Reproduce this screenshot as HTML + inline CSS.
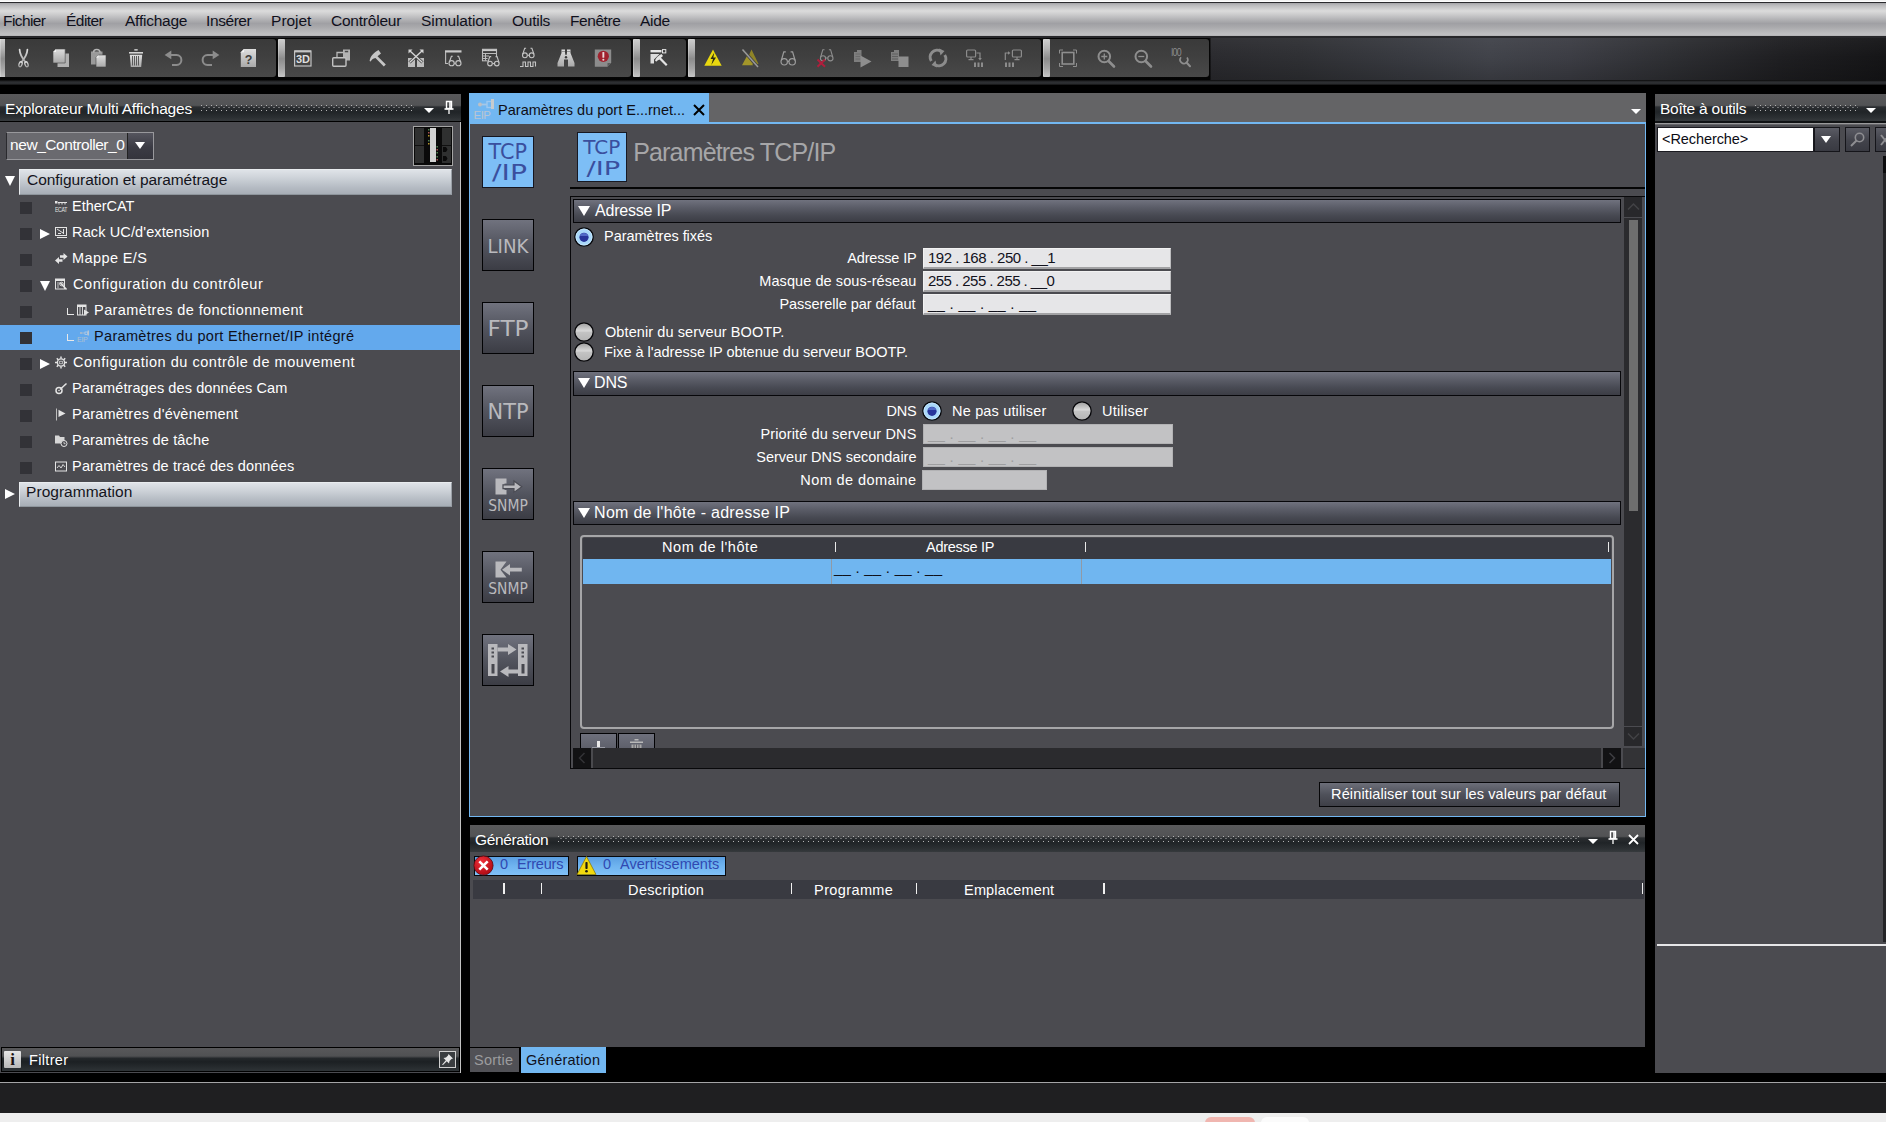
<!DOCTYPE html>
<html lang="fr"><head><meta charset="utf-8"><title>Sysmac Studio</title>
<style>
*{box-sizing:border-box;margin:0;padding:0}
html,body{width:1886px;height:1122px;overflow:hidden;background:#000}
body{position:relative;font-family:"Liberation Sans",sans-serif;font-size:14.5px;color:#fff;letter-spacing:0}
.a{position:absolute;white-space:nowrap}
.t{position:absolute;white-space:nowrap;line-height:20px;height:20px}
/* menu */
#topline{left:0;top:0;width:1886px;height:3px;background:linear-gradient(#f3f3f3 0,#f3f3f3 33%,#fdfdfd 33%,#fdfdfd 66%,#2a2a2d 66%)}
#menubar{left:0;top:3px;width:1886px;height:33px;background:linear-gradient(#a4a4a7 0,#b9b9bb 6%,#cbcbcc 15%,#dbdbdb 24%,#d0d0d1 32%,#c0c0c2 42%,#acacaf 54%,#a0a0a4 62%,#a8a8ab 72%,#b6b6b8 85%,#c0c0c2 95%,#b2b2b4 100%);border-bottom:0}
#menubar span{position:absolute;top:8px;line-height:20px;color:#10101c;font-size:15.5px}
/* toolbar */
#toolbar{left:0;top:38px;width:1886px;height:42px;background:linear-gradient(rgba(255,255,255,.04),rgba(255,255,255,0) 45%,rgba(0,0,0,.18)),linear-gradient(90deg,#040404 0,#040404 1210px,#2b2b2f 1211px,#2f3034 1300px,#383a40 1400px,#41434a 1490px,#3c3d44 1570px,#2e2f33 1670px,#1f1f22 1780px,#151517 1886px)}
#tbstripe{left:0;top:80px;width:1886px;height:5px;background:linear-gradient(#0a0a0a,#2e3033 40%,#2a2c2f 70%,#111)}
.tg{position:absolute;top:38px;height:40px;background:linear-gradient(#3a3a3a,#404040 50%,#494949);border:1px solid #050505;border-left:none;border-radius:0 4px 4px 0}
.grip{position:absolute;top:39px;height:38px;width:7px;background:linear-gradient(#cfcfcf,#b4b4b4 25%,#8c8c8c 52%,#a6a6a6 78%,#c6c6c6);box-shadow:inset 1px 0 0 rgba(255,255,255,.25);border-radius:1px}
.ic{position:absolute;top:46px;width:24px;height:24px}
/* panels */
.panel{position:absolute;background:#4b4b50}
.ptitle{position:absolute;height:27px;background:linear-gradient(#59595b 0,#525355 42%,#2b2e31 48%,#202427 66%,#2c3033 88%,#363a3d 100%)}
.ptitle .t{top:5px;left:5px;color:#fff;font-size:15.5px}
.dots{position:absolute;height:6px;top:11px}

.darr{position:absolute;top:14px;width:0;height:0;border-style:solid;border-color:#fff transparent transparent transparent;border-width:5px 5px 0 5px}
.rarr{position:absolute;width:0;height:0;border-style:solid;border-color:transparent transparent transparent #fff;border-width:5px 0 5px 10px}
.pin{position:absolute;top:6px;width:12px;height:16px}
.sect{position:absolute;left:19px;width:433px;background:linear-gradient(#dfe3e8 0,#cfd4da 30%,#b4bac2 75%,#a7aeb6 100%);border:1px solid #e9ecef;border-bottom-color:#8e959c;border-right-color:#9aa0a7}
.cb{position:absolute;left:20px;width:12px;height:12px;background:#323237}
.dots{background:linear-gradient(90deg,#b4b4b4 1px,transparent 1px) 0 0/5px 1px repeat-x,linear-gradient(90deg,transparent 2px,#707274 2px,#707274 4px,transparent 4px) 0 2px/5px 1px repeat-x,linear-gradient(90deg,#b4b4b4 1px,transparent 1px) 0 5px/5px 1px repeat-x}

.shdr{position:absolute;left:573px;width:1048px;border:1px solid #07070a;background:linear-gradient(#70727e 0,#5a5c67 35%,#474952 70%,#3c3d45 100%)}
.inp{position:absolute;background:#e6e6e8;border:1px solid #f2f2f2;border-bottom:2px solid #a2a2a4;border-right:1px solid #bdbdbf;color:#12121c;font-size:15px;line-height:17px;padding-left:4px;letter-spacing:-0.1px;white-space:pre}
.inp.dis{background:#c2c2c4;border:1px solid #b2b2b4;color:#9e9ea0;line-height:18px}
</style></head><body>
<div class="a" id="topline"></div>
<div class="a" id="menubar">
<span style="letter-spacing:-0.62px;left:3.1px">Fichier</span><span style="letter-spacing:-0.56px;left:66.1px">Éditer</span><span style="letter-spacing:-0.24px;left:125.0px">Affichage</span><span style="letter-spacing:-0.44px;left:206.1px">Insérer</span><span style="letter-spacing:-0.05px;left:271.1px">Projet</span><span style="letter-spacing:-0.22px;left:331.0px">Contrôleur</span><span style="letter-spacing:-0.12px;left:421.1px">Simulation</span><span style="letter-spacing:-0.25px;left:512.0px">Outils</span><span style="letter-spacing:-0.46px;left:570.1px">Fenêtre</span><span style="letter-spacing:-0.26px;left:640.0px">Aide</span>
</div>
<div class="a" style="left:0;top:36px;width:1886px;height:2px;background:#27272a"></div>
<div class="a" id="toolbar"></div>
<div class="a" id="tbstripe"></div>
<svg width="0" height="0" style="position:absolute"><defs>
<linearGradient id="gl" x1="0" y1="0" x2="0" y2="1"><stop offset="0" stop-color="#dedede"/><stop offset="1" stop-color="#a9a9a9"/></linearGradient>
<linearGradient id="gd" x1="0" y1="0" x2="0" y2="1"><stop offset="0" stop-color="#9a9a9a"/><stop offset="1" stop-color="#7c7c7c"/></linearGradient>
</defs></svg>
<div class="grip" style="left:0;width:5px;border-radius:0"></div>
<div class="tg" style="left:5px;width:272px"></div>
<svg class="ic" style="left:11px" viewBox="0 0 24 24"><g fill="none" stroke="url(#gl)" stroke-width="1.7" stroke-linecap="round"><path d="M8.6 3.6C8.8 8 11 12 14.6 16.2M16.4 3.6C16.2 8 14 12 10.4 16.2"/><ellipse cx="9.5" cy="18.3" rx="1.5" ry="2.6" transform="rotate(20 9.5 18.3)" stroke-width="1.3"/><ellipse cx="15.5" cy="18.3" rx="1.5" ry="2.6" transform="rotate(-20 15.5 18.3)" stroke-width="1.3"/></g></svg>
<svg class="ic" style="left:49px" viewBox="0 0 24 24"><path d="M8.5 7.5H20V21H8.5z" fill="#b2b2b2"/><path d="M7 3H16.2V17H4V6z" fill="url(#gl)" stroke="#454545" stroke-width=".6"/><path d="M4 6L7 3V6z" fill="#f2f2f2"/></svg>
<svg class="ic" style="left:86px" viewBox="0 0 24 24"><path d="M5 5.5H16.5V18.5H5z" fill="#9a9a9a"/><path d="M7.5 6.5C7.5 2.5 14 2.5 14 6.5" fill="none" stroke="#b5b5b5" stroke-width="1.6"/><path d="M12.5 9H20V21H10V11.5z" fill="url(#gl)" stroke="#454545" stroke-width=".6"/><path d="M10 11.5L12.5 9V11.5z" fill="#f2f2f2"/></svg>
<svg class="ic" style="left:124px" viewBox="0 0 24 24"><rect x="10.3" y="3" width="3.4" height="1.7" fill="#bcbcbc"/><rect x="5" y="6" width="14" height="1.6" fill="#d4d4d4"/><path d="M5.8 8.8H18.2L17.2 21H6.8z" fill="url(#gl)"/><path d="M8.5 10V19.5M10.5 10V19.5M12.5 10V19.5M14.5 10V19.5" stroke="#5a5a5a" stroke-width="1"/></svg>
<svg class="ic" style="left:161px" viewBox="0 0 24 24"><path d="M3.6 9L10.3 4.6V13.2z" fill="#8c8c8c"/><path d="M9.5 9H15.5C22 9 22 19 15.5 19H11" fill="none" stroke="#8c8c8c" stroke-width="2"/></svg>
<svg class="ic" style="left:199px" viewBox="0 0 24 24"><path d="M20.4 9L13.7 4.6V13.2z" fill="#8c8c8c"/><path d="M14.5 9H8.5C2 9 2 19 8.500 19H13" fill="none" stroke="#8c8c8c" stroke-width="2"/></svg>
<svg class="ic" style="left:236px" viewBox="0 0 24 24"><path d="M8 3H20V21H4.8V6.200z" fill="url(#gl)"/><path d="M4.8 6.200L8 3V6.200z" fill="#f4f4f4"/><text x="12.6" y="17.6" font-family="Liberation Sans,sans-serif" font-weight="bold" font-size="12.500" text-anchor="middle" fill="#3c3c3c" letter-spacing="0">?</text></svg>
<div class="tg" style="left:281px;width:351px"></div>
<div class="grip" style="left:278px;width:7px"></div>
<svg class="ic" style="left:291px" viewBox="0 0 24 24"><rect x="3.6" y="5" width="16.400" height="15" fill="none" stroke="#c4c4c4" stroke-width="1.2"/><rect x="3.600" y="4.400" width="16.400" height="2" fill="#c4c4c4"/><text x="11.8" y="17.2" font-family="Liberation Sans,sans-serif" font-weight="bold" font-size="11" text-anchor="middle" fill="#dedede" letter-spacing="-0.3">3D</text></svg>
<svg class="ic" style="left:329px" viewBox="0 0 24 24"><path d="M8 11V6.500H15.500" fill="none" stroke="#b9b9b9" stroke-width="1.300"/><rect x="14" y="3.5" width="7" height="11" fill="#b4b4b4"/><rect x="15.800" y="4.800" width="3.400" height="1.500" fill="#4a4a4a"/><rect x="3.700" y="11.700" width="13.300" height="8.600" rx="1" fill="#444" stroke="#c2c2c2" stroke-width="1.400"/></svg>
<svg class="ic" style="left:366px" viewBox="0 0 24 24"><path d="M3.600 15C4.500 9.500 8 6.500 12.500 4L15 7.500L11.500 10.200L19.800 18.500L17.800 20.500L9.500 12C7 12.500 5.500 13.500 4.800 15.500z" fill="#c6c6c6"/></svg>
<svg class="ic" style="left:404px" viewBox="0 0 24 24"><rect x="4" y="12" width="7" height="9" fill="#bdbdbd"/><rect x="13" y="12" width="7" height="9" fill="#bdbdbd"/><path d="M5.500 4.500L18.500 16.500M18.500 4.500L5.500 16.500" stroke="#444" stroke-width="3"/><path d="M5.500 4.500L18.500 16.500M18.500 4.500L5.500 16.500" stroke="#d6d6d6" stroke-width="1.300"/><path d="M4.500 3.500H8.500L4.500 7.500zM19.500 3.500H15.500L19.500 7.500z" fill="#d6d6d6"/></svg>
<svg class="ic" style="left:441px" viewBox="0 0 24 24"><rect x="4" y="4.300" width="16.500" height="2.200" fill="#c9c9c9"/><path d="M4.600 6V17.500H7" fill="none" stroke="#bdbdbd" stroke-width="1.100"/><g fill="none" stroke="#c4c4c4" stroke-width="1.1"><circle cx="10.6" cy="17.2" r="2.6"/><circle cx="17.4" cy="17.2" r="2.6"/><path d="M13.2 17.2H14.8"/><path d="M8.4 16.0L10.4 10.2H11.8M19.6 16.0L17.6 10.2H16.2"/></g></svg>
<svg class="ic" style="left:479px" viewBox="0 0 24 24"><rect x="3.500" y="3.300" width="14" height="11.500" fill="none" stroke="#bdbdbd" stroke-width="1.100"/><rect x="3.500" y="3.300" width="14" height="1.800" fill="#c9c9c9"/><path d="M3.500 7.500H17.500M3.500 10H10M3.500 12.500H9M6.500 7.500V14.500" stroke="#bdbdbd" stroke-width="1"/><rect x="8.500" y="11" width="12" height="9.500" fill="#444"/><g fill="none" stroke="#c4c4c4" stroke-width="1.1"><circle cx="11.0" cy="17.6" r="2.3"/><circle cx="17.8" cy="17.6" r="2.3"/><path d="M13.6 17.6H15.200000000000001"/><path d="M8.8 16.400000000000002L10.8 10.600000000000001H12.2M20.0 16.400000000000002L18.0 10.600000000000001H16.6"/></g></svg>
<svg class="ic" style="left:516px" viewBox="0 0 24 24"><g fill="none" stroke="#c4c4c4" stroke-width="1.1"><circle cx="8.9" cy="9.3" r="2.4"/><circle cx="15.700000000000001" cy="9.3" r="2.4"/><path d="M11.5 9.3H13.100000000000001"/><path d="M6.700000000000001 8.100000000000001L8.700000000000001 2.3000000000000007H10.100000000000001M17.9 8.100000000000001L15.9 2.3000000000000007H14.5"/></g><path d="M4 20.500H7V16H9.500V20.500H12V16H14.500V20.500H17V16H19.500V20.500" fill="none" stroke="#c4c4c4" stroke-width="1.100"/></svg>
<svg class="ic" style="left:554px" viewBox="0 0 24 24"><path d="M7.500 3.500H11V7L11.500 9H12.500L13 7V3.500H16.500V7L20.500 17V20.500H14V13.500H10V20.500H3.500V17L7.500 7z" fill="url(#gl)"/><circle cx="12" cy="11.300" r="1.200" fill="#3a3a3a"/><path d="M7.500 5.500H11M13 5.500H16.500" stroke="#777" stroke-width=".7"/></svg>
<svg class="ic" style="left:591px" viewBox="0 0 24 24"><path d="M3.800 3.600H20.200V17L16.500 20.800H3.800z" fill="#8c8c8c"/><path d="M20.200 17H16.500V20.800z" fill="#5c5c5c"/><circle cx="12.300" cy="10.300" r="5.600" fill="#a0222e"/><rect x="11.400" y="6" width="1.900" height="5.800" rx=".6" fill="#e9d9d9"/><circle cx="12.350" cy="13.700" r="1.050" fill="#e9d9d9"/></svg>
<div class="tg" style="left:636px;width:51px"></div>
<div class="grip" style="left:633px;width:7px"></div>
<svg class="ic" style="left:646px" viewBox="0 0 24 24"><rect x="4.500" y="4" width="11" height="2.400" fill="#e4e4e4"/><rect x="16.500" y="3.600" width="3.300" height="3.300" fill="none" stroke="#e4e4e4" stroke-width="1"/><path d="M4.500 8H13.500L8 13.500V17.500H4.500z" fill="#dcdcdc"/><path d="M9 14.500C10 11.500 12.500 9.500 15.500 8L17 10L15 11.800L21.500 18.500L20 20L13.500 13.500C12 14 11 14.800 10.300 15.800z" fill="#e4e4e4"/></svg>
<div class="tg" style="left:691px;width:351px"></div>
<div class="grip" style="left:688px;width:7px"></div>
<svg class="ic" style="left:701px" viewBox="0 0 24 24"><path d="M12 3.500L20.700 19.800H3.300z" fill="#e9d80f"/><path d="M13.300 6.500L9.500 13H12L10.300 19L15 11.500H12.300z" fill="#2b2b14"/></svg>
<svg class="ic" style="left:738px" viewBox="0 0 24 24"><path d="M13.500 3.500L20.500 18H7z" fill="#8f8427"/><path d="M9.500 9L15 19.300H4z" fill="#a3962a"/><path d="M5 4L19.500 20.500" stroke="#444" stroke-width="3.200"/><path d="M4.500 3.500L20 21" stroke="#9a9a9a" stroke-width="1.500"/></svg>
<svg class="ic" style="left:776px" viewBox="0 0 24 24"><g fill="none" stroke="#9c9c9c" stroke-width="1.200"><circle cx="8.200" cy="15.800" r="3.200"/><circle cx="16.200" cy="15.800" r="3.200"/><path d="M11.400 15.300H13M5.300 14.500L7.800 5.800H9.800M19.100 14.500L16.600 5.800H14.600"/></g></svg>
<svg class="ic" style="left:813px" viewBox="0 0 24 24"><g fill="none" stroke="#8e8e8e" stroke-width="1.100"><circle cx="10" cy="12.300" r="2.600"/><circle cx="17.400" cy="12.300" r="2.600"/><path d="M12.600 12H14.800M7.700 11L9.800 3.700H11.500M19.700 11L17.600 3.700H15.900"/></g><path d="M4.500 13.500L12 20.800M12 13.500L4.500 20.800" stroke="#b01e3c" stroke-width="2"/></svg>
<svg class="ic" style="left:851px" viewBox="0 0 24 24"><path d="M3 6H6V4H10.500V16H3z" fill="#7e7e7e"/><path d="M4.500 8H9.500M4.500 10.500H9.500M4.500 13H9.500" stroke="#666" stroke-width=".8"/><path d="M9.500 9.500L20.500 15.500L9.500 21.500z" fill="#8e8e8e"/></svg>
<svg class="ic" style="left:888px" viewBox="0 0 24 24"><path d="M3 6H6V4H11V15H3z" fill="#7e7e7e"/><path d="M4 8H10M4 10.500H10M4 13H10" stroke="#5c5c5c" stroke-width=".9"/><rect x="10.500" y="10.500" width="10" height="10.500" fill="#8e8e8e"/></svg>
<svg class="ic" style="left:926px" viewBox="0 0 24 24"><g fill="none" stroke="#8c8c8c" stroke-width="3"><path d="M5.300 15A7 7 0 0 1 15 5.300"/><path d="M18.700 9A7 7 0 0 1 9 18.700"/></g><path d="M13 2.500L18.500 5L14.500 9.500zM11 21.500L5.500 19L9.500 14.500z" fill="#8c8c8c"/></svg>
<svg class="ic" style="left:963px" viewBox="0 0 24 24"><g fill="none" stroke="#8c8c8c" stroke-width="1.200"><rect x="3.600" y="4" width="9" height="7" rx="1"/><path d="M5.500 13.700H10.500M8 11V13.700M13.500 7H17V13"/></g><path d="M15.200 12H18.800L17 14.500z" fill="#8c8c8c"/><path d="M11 16.500H13V21H11zM14.500 16.500H16.500V21H14.500zM18 16.500H20V21H18z" fill="#8c8c8c"/></svg>
<svg class="ic" style="left:1001px" viewBox="0 0 24 24"><g fill="none" stroke="#8c8c8c" stroke-width="1.200"><rect x="11.400" y="4" width="9" height="7" rx="1"/><path d="M13.500 13.700H18.500M16 11V13.700M4.300 14V7H7.500"/></g><path d="M7 5.200V8.800L9.500 7z" fill="#8c8c8c"/><path d="M4 16.500H6V21H4zM7.500 16.500H9.500V21H7.500zM11 16.500H13V21H11z" fill="#8c8c8c"/></svg>
<div class="tg" style="left:1046px;width:164px"></div>
<div class="grip" style="left:1043px;width:7px"></div>
<svg class="ic" style="left:1056px" viewBox="0 0 24 24"><g fill="none" stroke="#8e8e8e"><rect x="6.200" y="6.500" width="11.600" height="11.500" stroke-width="1.600"/><path d="M3.500 7.500V4H7M17 4H20.500V7.500M20.500 17V20.500H17M7 20.500H3.500V17" stroke-width="1"/></g></svg>
<svg class="ic" style="left:1094px" viewBox="0 0 24 24"><g fill="none" stroke="#8e8e8e"><circle cx="10.300" cy="10.500" r="5.800" stroke-width="2"/><path d="M14.500 15L20 20.500" stroke-width="2.600" stroke-linecap="round"/><path d="M7.300 10.500H13.300M10.300 7.500V13.500" stroke-width="1.300"/></g></svg>
<svg class="ic" style="left:1131px" viewBox="0 0 24 24"><g fill="none" stroke="#8e8e8e"><circle cx="10.300" cy="10.500" r="5.800" stroke-width="2"/><path d="M14.500 15L20 20.500" stroke-width="2.600" stroke-linecap="round"/><path d="M7.300 10.500H13.300" stroke-width="1.300"/></g></svg>
<svg class="ic" style="left:1169px" viewBox="0 0 24 24"><text x="2.500" y="10.500" font-family="Liberation Sans,sans-serif" font-size="10" fill="#8e8e8e" letter-spacing="-0.7" transform="scale(.88 1)">l00</text><g fill="none" stroke="#8e8e8e"><path d="M18 11.500A3.800 3.800 0 1 1 12 11.300" stroke-width="1.700"/><path d="M17.500 16.500L21 20.300" stroke-width="2" stroke-linecap="round"/></g></svg>
<div class="panel" style="left:0;top:94px;width:461px;height:979px"></div>
<div class="a" style="left:460px;top:121px;width:1px;height:952px;background:#c2c2c2"></div>
<div class="ptitle" style="left:0;top:94px;width:461px"><div class="t" style="letter-spacing:-0.17px;">Explorateur Multi Affichages</div><div class="dots" style="left:201px;width:213px"></div><div class="darr" style="left:424px"></div><svg class="pin" style="left:443px" viewBox="0 0 12 16"><path d="M3.500 1.500H8.500V8.500H3.500z" fill="none" stroke="#fff" stroke-width="1.400"/><path d="M7 2V8" stroke="#fff" stroke-width="1.600"/><path d="M1.500 9H10.500" stroke="#fff" stroke-width="1.600"/><path d="M6 9.500V14" stroke="#fff" stroke-width="1.300"/></svg></div>
<div class="a" style="left:0;top:121px;width:461px;height:1px;background:#000"></div>
<div class="a" style="left:6px;top:132px;width:148px;height:28px;border:1px solid #98989c;background:#6a6a6f;border-left-color:#2a2a2e"></div>
<div class="a" style="left:127px;top:133px;width:26px;height:26px;background:linear-gradient(#55555e,#3b3b44 55%,#34343c);border-left:1px solid #222"></div>
<div class="darr" style="left:135px;top:142px;border-width:7px 5.500px 0 5.500px"></div>
<div class="t" style="letter-spacing:-0.45px;left:10.1px;top:135px;font-size:15.500px">new_Controller_0</div>
<svg class="a" style="left:413px;top:126px" width="40" height="40" viewBox="0 0 40 40"><rect x=".5" y=".5" width="39" height="39" fill="#0a0a0a" stroke="#a4a4a4"/><rect x="2" y="2" width="9" height="35" fill="#2f3030"/><rect x="2" y="19" width="9" height="1" fill="#111"/><rect x="29" y="2" width="9" height="35" fill="#2f3030"/><rect x="29" y="19" width="9" height="1" fill="#111"/><rect x="17" y="2" width="6" height="34" fill="#d2d2d2"/><rect x="15" y="3" width="1.5" height="1.500" fill="#4f7f4f"/><rect x="15" y="6" width="1.500" height="1.500" fill="#a85050"/><rect x="15" y="9" width="1.500" height="1.500" fill="#b8962a"/><rect x="15" y="14" width="1.500" height="1.500" fill="#4f7f4f"/><rect x="15" y="17" width="1.500" height="1.500" fill="#b8962a"/><rect x="23.500" y="20" width="1.500" height="1.500" fill="#4f7f4f"/><rect x="23.500" y="23" width="1.500" height="1.500" fill="#a85050"/><rect x="23.500" y="26" width="1.500" height="1.500" fill="#4f7f4f"/><rect x="23.500" y="30" width="1.500" height="1.500" fill="#4f7f4f"/><rect x="23.500" y="33" width="1.500" height="1.500" fill="#a85050"/><path d="M30 21H33L34.500 23.500L33 26H30zM30 30H33L34.500 32.500L33 35H30z" fill="#0a0a0a"/></svg>
<div class="sect" style="top:169px;height:26px"></div><div class="t" style="letter-spacing:-0.05px;left:27.0px;top:170px;color:#14141c;font-size:15.5px">Configuration et paramétrage</div>
<div class="darr" style="left:5px;top:176px;border-width:10px 5.500px 0 5.500px"></div>
<div class="sect" style="top:482px;height:25px"></div><div class="t" style="letter-spacing:0.02px;left:26.1px;top:482px;color:#14141c;font-size:15.5px">Programmation</div>
<div class="rarr" style="left:5px;top:489px"></div>
<div class="cb" style="top:202px"></div>
<svg class="a" style="left:55px;top:200px" width="13" height="13" viewBox="0 0 13 13"><rect x="0" y="1" width="2.500" height="2.500" fill="#e4e4e4"/><path d="M3 2.500H12M4 2.500V4.500M7 2.500V4.500M10 2.500V4.500" stroke="#e4e4e4" stroke-width="1"/><text x="0" y="11.500" font-family="Liberation Sans,sans-serif" font-size="8" fill="#e4e4e4" letter-spacing="-0.5" textLength="12" lengthAdjust="spacingAndGlyphs">ECAT</text></svg>
<div class="t" style="letter-spacing:-0.05px;left:72.1px;top:196px">EtherCAT</div>
<div class="cb" style="top:228px"></div>
<div class="rarr" style="left:40px;top:229px"></div>
<svg class="a" style="left:55px;top:226px" width="13" height="13" viewBox="0 0 13 13"><rect x=".5" y="1.500" width="11" height="8" fill="none" stroke="#e4e4e4"/><path d="M2 3L8 7M3 7.500H6M8.500 3V8M2 11.500H12" stroke="#e4e4e4" stroke-width="1"/></svg>
<div class="t" style="letter-spacing:0.12px;left:72.1px;top:222px">Rack UC/d'extension</div>
<div class="cb" style="top:254px"></div>
<svg class="a" style="left:55px;top:252px" width="13" height="13" viewBox="0 0 13 13"><path d="M5 3.200H8.500V1L12.500 4.500L8.500 8V5.800H5zM7.500 7.200H4V5L0 8.500L4 12V9.800H7.500z" fill="#e4e4e4"/></svg>
<div class="t" style="letter-spacing:0.38px;left:72.1px;top:248px">Mappe E/S</div>
<div class="cb" style="top:280px"></div>
<div class="darr" style="left:40px;top:281px;border-width:10px 5px 0 5px"></div>
<svg class="a" style="left:55px;top:278px" width="13" height="13" viewBox="0 0 13 13"><rect x=".5" y="1" width="9" height="10" fill="none" stroke="#e4e4e4"/><rect x=".5" y="1" width="9" height="2" fill="#e4e4e4"/><path d="M2 5H5M2 7H4M2 9H4" stroke="#e4e4e4" stroke-width=".8"/><path d="M5.500 5L11.500 11.500" stroke="#e4e4e4" stroke-width="1.600"/><circle cx="6.500" cy="6" r="1.800" fill="none" stroke="#e4e4e4" stroke-width=".9"/></svg>
<div class="t" style="letter-spacing:0.57px;left:73.0px;top:274px">Configuration du contrôleur</div>
<div class="cb" style="top:306px"></div>
<div class="a" style="left:67px;top:308px;width:7px;height:7px;border-left:1px solid #e8e8e8;border-bottom:1px solid #e8e8e8"></div>
<svg class="a" style="left:77px;top:304px" width="13" height="13" viewBox="0 0 13 13"><rect x=".5" y="1" width="8.500" height="10" fill="none" stroke="#e4e4e4"/><rect x=".5" y="1" width="8.500" height="2" fill="#e4e4e4"/><path d="M3 3V11M5.500 3V11" stroke="#e4e4e4" stroke-width=".9"/><path d="M7 5.500L12 8.500L7 11.500z" fill="#e4e4e4"/></svg>
<div class="t" style="letter-spacing:0.39px;left:94.1px;top:300px">Paramètres de fonctionnement</div>
<div class="a" style="left:0;top:325px"></div>
<div class="a" style="left:0;top:325px;width:460px;height:25px;background:#63a9ed"></div>
<div class="cb" style="top:332px"></div>
<div class="a" style="left:67px;top:334px;width:7px;height:7px;border-left:1px solid #e8e8e8;border-bottom:1px solid #e8e8e8"></div>
<svg class="a" style="left:77px;top:330px" width="13" height="13" viewBox="0 0 13 13"><g opacity=".75"><circle cx="4" cy="3" r="1.100" fill="#c9c2c0"/><path d="M5 3H8" stroke="#c9c2c0" stroke-width=".9"/><rect x="8" y="2" width="2.500" height="2.500" fill="none" stroke="#c9d9ea" stroke-width=".8"/><rect x="10.500" y=".5" width="1.500" height="5" fill="#d6cfc9"/><text x="0" y="12" font-family="Liberation Sans,sans-serif" font-size="6.500" fill="#c8c8c8" letter-spacing="-0.3" textLength="10.500" lengthAdjust="spacingAndGlyphs">EIP</text></g></svg>
<div class="t" style="letter-spacing:0.30px;left:94.1px;top:326px;color:#10101a">Paramètres du port Ethernet/IP intégré</div>
<div class="cb" style="top:358px"></div>
<div class="rarr" style="left:40px;top:359px"></div>
<svg class="a" style="left:55px;top:356px" width="13" height="13" viewBox="0 0 13 13"><circle cx="6" cy="6.500" r="3.600" fill="none" stroke="#e4e4e4" stroke-width="1.400"/><rect x="4.700" y="5.200" width="2.600" height="2.600" fill="none" stroke="#e4e4e4" stroke-width=".7"/><g stroke="#e4e4e4" stroke-width="1.500"><path d="M6 .5V2.500M6 10.500V12.500M0 6.500H2M10 6.500H12M1.800 2.300L3.200 3.700M8.800 9.300L10.200 10.700M10.200 2.300L8.800 3.700M3.200 9.300L1.800 10.700"/></g></svg>
<div class="t" style="letter-spacing:0.53px;left:73.0px;top:352px">Configuration du contrôle de mouvement</div>
<div class="cb" style="top:384px"></div>
<svg class="a" style="left:55px;top:382px" width="13" height="13" viewBox="0 0 13 13"><circle cx="4" cy="8.500" r="3" fill="none" stroke="#e4e4e4" stroke-width="1.500"/><path d="M5 7.500L11.500 1.500" stroke="#e4e4e4" stroke-width="1.500"/><circle cx="4" cy="8.500" r=".8" fill="#e4e4e4"/></svg>
<div class="t" style="letter-spacing:0.09px;left:72.1px;top:378px">Paramétrages des données Cam</div>
<div class="cb" style="top:410px"></div>
<svg class="a" style="left:55px;top:408px" width="13" height="13" viewBox="0 0 13 13"><path d="M1.500 .5V12.500" stroke="#bdbdbd" stroke-width="1"/><path d="M3.500 1.800L10.500 5.500L3.500 9z" fill="#e4e4e4"/></svg>
<div class="t" style="letter-spacing:0.21px;left:72.1px;top:404px">Paramètres d'évènement</div>
<div class="cb" style="top:436px"></div>
<svg class="a" style="left:55px;top:434px" width="13" height="13" viewBox="0 0 13 13"><path d="M0 1.500H4L5 3H9.500V9.500H0z" fill="#d6d6d6"/><circle cx="9" cy="9.500" r="3" fill="#4b4b50" stroke="#e4e4e4" stroke-width="1"/><path d="M9 8V9.700H10.500" stroke="#e4e4e4" stroke-width=".8" fill="none"/></svg>
<div class="t" style="letter-spacing:0.14px;left:72.1px;top:430px">Paramètres de tâche</div>
<div class="cb" style="top:462px"></div>
<svg class="a" style="left:55px;top:460px" width="13" height="13" viewBox="0 0 13 13"><rect x=".5" y="2" width="11" height="9" fill="none" stroke="#e4e4e4"/><path d="M2 8L4 5.500L6 8L8 4.500L10 7" stroke="#e4e4e4" stroke-width=".9" fill="none"/></svg>
<div class="t" style="letter-spacing:0.12px;left:72.1px;top:456px">Paramètres de tracé des données</div>
<div class="a" style="left:1px;top:1047px;width:459px;height:25px;border:1px solid #000;background:linear-gradient(#58585a 0,#505153 35%,#24282b 45%,#1c2023 60%,#2e3336 100%)"></div>
<div class="a" style="left:4px;top:1051px;width:17px;height:17px;background:linear-gradient(#e6e6e6,#b8b8b8);border-radius:1px;color:#1a1010;font-family:'Liberation Serif',serif;font-weight:bold;font-size:17px;line-height:17px;text-align:center;letter-spacing:0">i</div>
<div class="t" style="letter-spacing:0.31px;left:29.1px;top:1050px">Filtrer</div>
<svg class="a" style="left:439px;top:1051px" width="17" height="17" viewBox="0 0 17 17"><rect x=".5" y=".5" width="16" height="16" fill="#3a3d40" stroke="#d0d0d0"/><path d="M9.500 3L14 7.500L12.500 8L10.500 10L10 12.500L7.800 10.200L4 14L3 13.800L6.800 9.200L4.500 7L7 6.500L9 4.500z" fill="#e8e8e8"/></svg>
<div class="a" style="left:469px;top:93px;width:1177px;height:31px;background:#646466"></div>
<div class="a" style="left:469px;top:93px;width:240px;height:31px;background:#72b7f1"></div>
<div class="a" style="left:469px;top:122px;width:1177px;height:2px;background:#72b7f1"></div>
<div class="a" style="left:469px;top:124px;width:1177px;height:693px;background:#4b4b50;border:1px solid #72b7f1;border-top:none"></div>
<svg class="a" style="left:473px;top:98px" width="22" height="22" viewBox="0 0 22 22"><g opacity=".8"><circle cx="7" cy="6.500" r="2" fill="#d2c2b8"/><path d="M9 6.500H14" stroke="#b4cbe4" stroke-width="1.800"/><rect x="14" y="3.500" width="5" height="6" fill="none" stroke="#a9cdf0" stroke-width="1.400"/><path d="M18 1H21V11H18z" fill="#dcd0c6"/><text x="0.500" y="20.800" font-family="Liberation Sans,sans-serif" font-size="11.500" fill="#cbc9cc" letter-spacing="-0.5">EIP</text></g></svg>
<div class="t" style="letter-spacing:0.00px;left:498.1px;top:100px;color:#0e0e16">Paramètres du port E...rnet...</div>
<svg class="a" style="left:693px;top:104px" width="12" height="12" viewBox="0 0 12 12"><path d="M1 1L11 11M11 1L1 11" stroke="#000" stroke-width="2"/></svg>
<div class="darr" style="left:1631px;top:109px"></div>
<svg class="a" style="left:482px;top:136px" width="52" height="52" viewBox="0 0 52 52"><rect x=".5" y=".5" width="51" height="51" fill="#7dbef6" stroke="#15151f"/><text x="25.800" y="22.600" text-anchor="middle" font-family="DejaVu Sans,sans-serif" font-size="20.500" fill="#3a4f9e" textLength="38.500" lengthAdjust="spacingAndGlyphs">TCP</text><text x="27.500" y="44.300" text-anchor="middle" font-family="DejaVu Sans,sans-serif" font-size="20.500" fill="#3a4f9e" textLength="35" lengthAdjust="spacingAndGlyphs">/IP</text></svg>
<svg class="a" style="left:482px;top:219px" width="52" height="52" viewBox="0 0 52 52"><defs><linearGradient id="sb219" x1="0" y1="0" x2="0" y2="1"><stop offset="0" stop-color="#71737f"/><stop offset=".5" stop-color="#52545e"/><stop offset="1" stop-color="#3b3c44"/></linearGradient></defs><rect x=".5" y=".5" width="51" height="51" fill="url(#sb219)" stroke="#020204"/><text x="26" y="34" text-anchor="middle" font-family="DejaVu Sans,sans-serif" font-size="20" fill="#b9b9bd" textLength="41" lengthAdjust="spacingAndGlyphs">LINK</text></svg>
<svg class="a" style="left:482px;top:302px" width="52" height="52" viewBox="0 0 52 52"><defs><linearGradient id="sb302" x1="0" y1="0" x2="0" y2="1"><stop offset="0" stop-color="#71737f"/><stop offset=".5" stop-color="#52545e"/><stop offset="1" stop-color="#3b3c44"/></linearGradient></defs><rect x=".5" y=".5" width="51" height="51" fill="url(#sb302)" stroke="#020204"/><text x="26" y="34" text-anchor="middle" font-family="DejaVu Sans,sans-serif" font-size="22" fill="#b9b9bd" textLength="41" lengthAdjust="spacingAndGlyphs">FTP</text></svg>
<svg class="a" style="left:482px;top:385px" width="52" height="52" viewBox="0 0 52 52"><defs><linearGradient id="sb385" x1="0" y1="0" x2="0" y2="1"><stop offset="0" stop-color="#71737f"/><stop offset=".5" stop-color="#52545e"/><stop offset="1" stop-color="#3b3c44"/></linearGradient></defs><rect x=".5" y=".5" width="51" height="51" fill="url(#sb385)" stroke="#020204"/><text x="26" y="34" text-anchor="middle" font-family="DejaVu Sans,sans-serif" font-size="22" fill="#b9b9bd" textLength="41" lengthAdjust="spacingAndGlyphs">NTP</text></svg>
<svg class="a" style="left:482px;top:468px" width="52" height="52" viewBox="0 0 52 52"><defs><linearGradient id="sb468" x1="0" y1="0" x2="0" y2="1"><stop offset="0" stop-color="#71737f"/><stop offset=".5" stop-color="#52545e"/><stop offset="1" stop-color="#3b3c44"/></linearGradient></defs><rect x=".5" y=".5" width="51" height="51" fill="url(#sb468)" stroke="#020204"/><path d="M13.500 10.500H24.500V15.500H22.500V22H24.500V26.500H13.500z" fill="#b9b9bd"/><path d="M21 16.800H32V13L39.800 18.700L32 24.400V20.600H21z" fill="#b9b9bd" stroke="#4a4b53" stroke-width="1.200"/><text x="26" y="42.8" text-anchor="middle" font-family="DejaVu Sans,sans-serif" font-size="15.5" fill="#b9b9bd" textLength="39.5" lengthAdjust="spacingAndGlyphs">SNMP</text></svg>
<svg class="a" style="left:482px;top:551px" width="52" height="52" viewBox="0 0 52 52"><defs><linearGradient id="sb551" x1="0" y1="0" x2="0" y2="1"><stop offset="0" stop-color="#71737f"/><stop offset=".5" stop-color="#52545e"/><stop offset="1" stop-color="#3b3c44"/></linearGradient></defs><rect x=".5" y=".5" width="51" height="51" fill="url(#sb551)" stroke="#020204"/><path d="M13.500 10.500H24.500L18.500 18.700L24.500 26.500H13.500z" fill="#b9b9bd"/><path d="M39.800 16.800H28V13L20 18.700L28 24.400V20.600H39.800z" fill="#b9b9bd"/><text x="26" y="42.8" text-anchor="middle" font-family="DejaVu Sans,sans-serif" font-size="15.5" fill="#b9b9bd" textLength="39.5" lengthAdjust="spacingAndGlyphs">SNMP</text></svg>
<svg class="a" style="left:482px;top:634px" width="52" height="52" viewBox="0 0 52 52"><defs><linearGradient id="sb634" x1="0" y1="0" x2="0" y2="1"><stop offset="0" stop-color="#71737f"/><stop offset=".5" stop-color="#52545e"/><stop offset="1" stop-color="#3b3c44"/></linearGradient></defs><rect x=".5" y=".5" width="51" height="51" fill="url(#sb634)" stroke="#020204"/><rect x="6" y="10" width="9.500" height="32" fill="#b9b9bd"/><rect x="36" y="10" width="9.500" height="32" fill="#b9b9bd"/><path d="M9.500 14.500H12M9.500 18.500H12M9.500 22.500H12M39.500 14.500H42M39.500 18.500H42M39.500 22.500H42" stroke="#4a4b52" stroke-width="2"/><rect x="9.500" y="30" width="3" height="9.500" fill="#46474e"/><rect x="39.500" y="30" width="3" height="9.500" fill="#46474e"/><path d="M15.500 13.500H26V10L34.500 15.500L26 21V17.500H15.500zM36 35.500H26.500V32L18 37.500L26.500 43V39.500H36z" fill="#b9b9bd"/></svg>
<svg class="a" style="left:577px;top:132px" width="50" height="50" viewBox="0 0 52 52"><rect x=".5" y=".5" width="51" height="51" fill="#7dbef6" stroke="#15151f"/><text x="25.800" y="22.600" text-anchor="middle" font-family="DejaVu Sans,sans-serif" font-size="20.500" fill="#3a4f9e" textLength="38.500" lengthAdjust="spacingAndGlyphs">TCP</text><text x="27.500" y="44.300" text-anchor="middle" font-family="DejaVu Sans,sans-serif" font-size="20.500" fill="#3a4f9e" textLength="35" lengthAdjust="spacingAndGlyphs">/IP</text></svg>
<div class="t" style="letter-spacing:-0.83px;left:633.2px;top:135px;font-size:25px;line-height:34px;height:34px;color:#a6a6a8">Paramètres TCP/IP</div>
<div class="a" style="left:570px;top:187px;width:1075px;height:2px;background:#050505"></div>
<div class="a" style="left:570px;top:196px;width:1075px;height:573px;border:1px solid #08080a;border-right:none"></div>
<div class="shdr" style="top:199px;height:24px"></div><div class="darr" style="left:578px;top:206px;border-width:10px 6px 0 6px"></div><div class="t" style="letter-spacing:-0.21px;left:595.0px;top:199.5px;font-size:16px;line-height:22px;height:22px">Adresse IP</div>
<div class="shdr" style="top:371px;height:25px"></div><div class="darr" style="left:578px;top:378px;border-width:10px 6px 0 6px"></div><div class="t" style="letter-spacing:-0.19px;left:594.1px;top:371.5px;font-size:16px;line-height:22px;height:22px">DNS</div>
<div class="shdr" style="top:501px;height:24px"></div><div class="darr" style="left:578px;top:508px;border-width:10px 6px 0 6px"></div><div class="t" style="letter-spacing:0.28px;left:594.1px;top:501.5px;font-size:16px;line-height:22px;height:22px">Nom de l'hôte - adresse IP</div>
<svg class="a" style="left:574px;top:227px" width="20" height="20" viewBox="0 0 20 20"><circle cx="10" cy="10" r="9.200" fill="#a9d8fa" stroke="#050508" stroke-width="1.300"/><circle cx="10" cy="10" r="8" fill="none" stroke="#d4ecfd" stroke-width="1" opacity=".6"/><circle cx="10" cy="10.300" r="4.600" fill="#26349a"/><path d="M5.800 9A4.500 4.500 0 0 1 14.200 9z" fill="#5d78d2" opacity=".8"/></svg>
<div class="t" style="letter-spacing:-0.04px;left:604.1px;top:226px">Paramètres fixés</div>
<div class="t" style="letter-spacing:-0.17px;right:969.5px;top:248px">Adresse IP</div>
<div class="t" style="letter-spacing:0.08px;right:969.5px;top:271px">Masque de sous-réseau</div>
<div class="t" style="letter-spacing:-0.04px;right:970.4px;top:294px">Passerelle par défaut</div>
<div class="inp" style="left:923px;top:248px;width:248px;height:21px"><span style="letter-spacing:-0.50px;">192 . 168 . 250 . __1</span></div>
<div class="inp" style="left:923px;top:271px;width:248px;height:21px"><span style="letter-spacing:-0.54px;">255 . 255 . 255 . __0</span></div>
<div class="inp" style="left:923px;top:294px;width:248px;height:21px"><span style="letter-spacing:0.24px;">__ . __ . __ . __</span></div>
<svg class="a" style="left:574px;top:322px" width="20" height="20" viewBox="0 0 20 20"><defs><linearGradient id="ro584332" x1="0" y1="0" x2="0" y2="1"><stop offset="0" stop-color="#9e9e9e"/><stop offset=".45" stop-color="#dadada"/><stop offset=".5" stop-color="#c4c4c4"/><stop offset="1" stop-color="#b4b4b4"/></linearGradient></defs><circle cx="10" cy="10" r="9.200" fill="url(#ro584332)" stroke="#050508" stroke-width="1.300"/></svg>
<div class="t" style="letter-spacing:0.09px;left:605.0px;top:322px">Obtenir du serveur BOOTP.</div>
<svg class="a" style="left:574px;top:342px" width="20" height="20" viewBox="0 0 20 20"><defs><linearGradient id="ro584352" x1="0" y1="0" x2="0" y2="1"><stop offset="0" stop-color="#9e9e9e"/><stop offset=".45" stop-color="#dadada"/><stop offset=".5" stop-color="#c4c4c4"/><stop offset="1" stop-color="#b4b4b4"/></linearGradient></defs><circle cx="10" cy="10" r="9.200" fill="url(#ro584352)" stroke="#050508" stroke-width="1.300"/></svg>
<div class="t" style="letter-spacing:-0.01px;left:604.1px;top:342px">Fixe à l'adresse IP obtenue du serveur BOOTP.</div>
<div class="t" style="letter-spacing:-0.20px;right:969.5px;top:401px">DNS</div>
<svg class="a" style="left:922px;top:401px" width="20" height="20" viewBox="0 0 20 20"><circle cx="10" cy="10" r="9.200" fill="#a9d8fa" stroke="#050508" stroke-width="1.300"/><circle cx="10" cy="10" r="8" fill="none" stroke="#d4ecfd" stroke-width="1" opacity=".6"/><circle cx="10" cy="10.300" r="4.600" fill="#26349a"/><path d="M5.800 9A4.500 4.500 0 0 1 14.200 9z" fill="#5d78d2" opacity=".8"/></svg>
<div class="t" style="letter-spacing:0.16px;left:952.1px;top:401px">Ne pas utiliser</div>
<svg class="a" style="left:1072px;top:401px" width="20" height="20" viewBox="0 0 20 20"><defs><linearGradient id="ro1082411" x1="0" y1="0" x2="0" y2="1"><stop offset="0" stop-color="#9e9e9e"/><stop offset=".45" stop-color="#dadada"/><stop offset=".5" stop-color="#c4c4c4"/><stop offset="1" stop-color="#b4b4b4"/></linearGradient></defs><circle cx="10" cy="10" r="9.200" fill="url(#ro1082411)" stroke="#050508" stroke-width="1.300"/></svg>
<div class="t" style="letter-spacing:0.23px;left:1102.1px;top:401px">Utiliser</div>
<div class="t" style="letter-spacing:0.13px;right:969.5px;top:424px">Priorité du serveur DNS</div>
<div class="t" style="letter-spacing:-0.01px;right:969.5px;top:447px">Serveur DNS secondaire</div>
<div class="t" style="letter-spacing:0.41px;right:969.5px;top:470px">Nom de domaine</div>
<div class="inp dis" style="left:923px;top:424px;width:250px;height:20px"><span style="letter-spacing:0.24px;">__ . __ . __ . __</span></div>
<div class="inp dis" style="left:923px;top:447px;width:250px;height:20px"><span style="letter-spacing:0.24px;">__ . __ . __ . __</span></div>
<div class="inp dis" style="left:922px;top:470px;width:125px;height:20px"></div>
<div class="a" style="left:580px;top:535px;width:1034px;height:194px;border:2px solid #a6a6a8;border-radius:4px;background:#4b4b50"></div>
<div class="a" style="left:583px;top:538px;width:1028px;height:21px;background:#393a41"></div>
<div class="a" style="left:583px;top:559px;width:1028px;height:25px;background:#70b6f0"></div>
<div class="a" style="left:831px;top:559px;width:1px;height:25px;background:#8f9aa6"></div><div class="a" style="left:1081px;top:559px;width:1px;height:25px;background:#8f9aa6"></div>
<div class="a" style="left:835px;top:542px;width:1px;height:10px;background:#e8e8e8"></div>
<div class="a" style="left:1085px;top:542px;width:1px;height:10px;background:#e8e8e8"></div>
<div class="a" style="left:1608px;top:542px;width:1px;height:10px;background:#e8e8e8"></div>
<div class="t" style="letter-spacing:0.55px;left:662.1px;top:537px">Nom de l'hôte</div>
<div class="t" style="letter-spacing:-0.27px;left:926.0px;top:537px">Adresse IP</div>
<div class="t" style="letter-spacing:0.24px;left:833.9px;top:558px;color:#10101a;font-size:15px">__ . __ . __ . __</div>
<div class="a" style="left:580px;top:733px;width:37px;height:15px;border:1px solid #020204;border-bottom:none;background:linear-gradient(#6e707c,#5e606b)"></div><div class="a" style="left:618px;top:733px;width:37px;height:15px;border:1px solid #020204;border-bottom:none;background:linear-gradient(#6e707c,#5e606b)"></div>
<div class="a" style="left:597px;top:741px;width:3px;height:7px;background:#e8e8e8"></div><div class="a" style="left:592px;top:747px;width:13px;height:1px;background:#9a9ca6"></div>
<svg class="a" style="left:629px;top:739px" width="15" height="9" viewBox="0 0 15 9"><rect x="5.500" y="0" width="4" height="1.500" fill="#b8b8b8"/><rect x="1" y="2.500" width="13" height="1.500" fill="#b8b8b8"/><path d="M2.500 5.500H12.500V9H2.500z" fill="#a8a8a8"/><path d="M5 5.500V9M7.500 5.500V9M10 5.500V9" stroke="#55565e" stroke-width=".9"/></svg>
<div class="a" style="left:573px;top:748px;width:1048px;height:20px;background:#2b2b2e"></div>
<div class="a" style="left:573px;top:748px;width:18px;height:20px;background:#121214"></div><div class="a" style="left:591px;top:748px;width:2px;height:20px;background:#4a4a4e"></div><div class="a" style="left:1603px;top:748px;width:18px;height:20px;background:#121214"></div>
<svg class="a" style="left:577px;top:752px" width="10" height="12" viewBox="0 0 10 12"><path d="M7.500 1L2.500 6L7.500 11" fill="none" stroke="#333336" stroke-width="1.500"/></svg>
<svg class="a" style="left:1607px;top:752px" width="10" height="12" viewBox="0 0 10 12"><path d="M2.500 1L7.500 6L2.500 11" fill="none" stroke="#3e3e42" stroke-width="1.500"/></svg>
<div class="a" style="left:1624px;top:197px;width:18px;height:551px;background:#2b2b2e"></div>
<div class="a" style="left:1624px;top:197px;width:18px;height:20px;background:#28282b"></div><div class="a" style="left:1624px;top:217px;width:18px;height:1px;background:#4b4b50"></div>
<div class="a" style="left:1624px;top:727px;width:18px;height:19px;background:#28282b"></div><div class="a" style="left:1624px;top:726px;width:18px;height:1px;background:#4b4b50"></div><div class="a" style="left:1624px;top:746px;width:18px;height:2px;background:#4b4b50"></div><div class="a" style="left:1623px;top:748px;width:22px;height:20px;background:#333336"></div><div class="a" style="left:1621px;top:748px;width:2px;height:20px;background:#4b4b50"></div><div class="a" style="left:1601px;top:748px;width:2px;height:20px;background:#48484c"></div>
<svg class="a" style="left:1627px;top:202px" width="13" height="9" viewBox="0 0 13 9"><path d="M1 7.500L6.500 2L12 7.500" fill="none" stroke="#424246" stroke-width="1.500"/></svg>
<svg class="a" style="left:1627px;top:732px" width="13" height="9" viewBox="0 0 13 9"><path d="M1 1.500L6.500 7L12 1.500" fill="none" stroke="#424246" stroke-width="1.500"/></svg>
<div class="a" style="left:1629px;top:220px;width:9px;height:291px;background:#6e6e6e"></div>
<div class="a" style="left:1319px;top:782px;width:301px;height:25px;border:1px solid #060608;background:linear-gradient(#6c6e79,#4f515a 50%,#3e3f47)"></div>
<div class="t" style="letter-spacing:0.12px;left:1331.1px;top:784px;">Réinitialiser tout sur les valeurs par défaut</div>
<div class="panel" style="left:470px;top:825px;width:1175px;height:222px"></div>
<div class="ptitle" style="left:470px;top:825px;width:1175px"><div class="t" style="letter-spacing:-0.35px;">Génération</div><div class="dots" style="left:88px;width:1022px"></div><div class="darr" style="left:1118px"></div><svg class="pin" style="left:1137px;top:5px" viewBox="0 0 12 16"><path d="M3.500 1.500H8.500V8.500H3.500z" fill="none" stroke="#fff" stroke-width="1.400"/><path d="M7 2V8" stroke="#fff" stroke-width="1.600"/><path d="M1.500 9H10.500" stroke="#fff" stroke-width="1.600"/><path d="M6 9.500V14" stroke="#fff" stroke-width="1.300"/></svg><svg class="a" style="left:1158px;top:9px" width="11" height="11" viewBox="0 0 11 11"><path d="M1 1L10 10M10 1L1 10" stroke="#fff" stroke-width="1.800"/></svg></div>
<div class="a" style="left:474px;top:856px;width:95px;height:20px;border:1px solid #06080c;background:linear-gradient(#5b9fe2,#6fb4f0 50%,#80c0f7)"></div>
<div class="a" style="left:577px;top:856px;width:149px;height:20px;border:1px solid #06080c;background:linear-gradient(#5b9fe2,#6fb4f0 50%,#80c0f7)"></div>
<svg class="a" style="left:473px;top:855px" width="21" height="21" viewBox="0 0 21 21"><defs><radialGradient id="rg" cx=".4" cy=".3" r=".8"><stop offset="0" stop-color="#f0303a"/><stop offset="1" stop-color="#a8060e"/></radialGradient></defs><circle cx="10.500" cy="10.500" r="9.600" fill="url(#rg)" stroke="#5a0a10" stroke-width=".8"/><path d="M6.300 6.300L14.700 14.700M14.700 6.300L6.300 14.700" stroke="#fff" stroke-width="2.600"/></svg>
<svg class="a" style="left:576px;top:855px" width="21" height="21" viewBox="0 0 21 21"><path d="M10.500 1.500L20 19.500H1z" fill="#f2d90e" stroke="#8a7a08" stroke-width=".8"/><rect x="9.400" y="7" width="2.200" height="7" rx=".8" fill="#1a1a10"/><circle cx="10.500" cy="16.300" r="1.300" fill="#1a1a10"/></svg>
<div class="t" style="left:500px;top:854px;color:#3049b2">0</div><div class="t" style="letter-spacing:-0.19px;left:517.1px;top:854px;color:#3049b2">Erreurs</div>
<div class="t" style="left:603px;top:854px;color:#3049b2">0</div><div class="t" style="letter-spacing:0.03px;left:620.0px;top:854px;color:#3049b2">Avertissements</div>
<div class="a" style="left:473px;top:880px;width:1171px;height:19px;background:#393a41"></div>
<div class="a" style="left:503px;top:883px;width:2px;height:11px;background:#f0f0f0"></div>
<div class="a" style="left:541px;top:883px;width:1px;height:11px;background:#f0f0f0"></div>
<div class="a" style="left:791px;top:883px;width:1px;height:11px;background:#f0f0f0"></div>
<div class="a" style="left:916px;top:883px;width:1px;height:11px;background:#f0f0f0"></div>
<div class="a" style="left:1103px;top:883px;width:2px;height:11px;background:#f0f0f0"></div>
<div class="a" style="left:1642px;top:883px;width:1px;height:11px;background:#f0f0f0"></div>
<div class="t" style="letter-spacing:0.33px;left:628.1px;top:880px">Description</div><div class="t" style="letter-spacing:0.38px;left:814.1px;top:880px">Programme</div><div class="t" style="letter-spacing:0.14px;left:964.1px;top:880px">Emplacement</div>
<div class="a" style="left:470px;top:1048px;width:49px;height:24px;background:#515156"></div><div class="t" style="letter-spacing:0.22px;left:474.1px;top:1050px;color:#9c9c9e">Sortie</div>
<div class="a" style="left:521px;top:1047px;width:85px;height:26px;background:#72b7f1"></div><div class="t" style="letter-spacing:0.25px;left:526.0px;top:1050px;color:#10101a">Génération</div>
<div class="panel" style="left:1655px;top:94px;width:231px;height:979px"></div>
<div class="ptitle" style="left:1655px;top:94px;width:231px"><div class="t" style="letter-spacing:-0.24px;">Boîte à outils</div><div class="dots" style="left:100px;width:103px"></div><div class="darr" style="left:211px"></div></div>
<div class="a" style="left:1655px;top:121px;width:231px;height:2px;background:#101214"></div><div class="a" style="left:1655px;top:123px;width:231px;height:1px;background:#9a9a9c"></div><div class="a" style="left:1655px;top:124px;width:231px;height:1px;background:#66666a"></div>
<div class="a" style="left:1657px;top:127px;width:157px;height:25px;background:#fff;border:1px solid #1a1a20"></div>
<div class="t" style="letter-spacing:-0.08px;left:1662.0px;top:129px;color:#0c0c14">&lt;Recherche&gt;</div>
<div class="a" style="left:1814px;top:127px;width:26px;height:25px;border:1px solid #15151a;background:linear-gradient(#5a5b64,#42434b 55%,#393a42)"></div><div class="darr" style="left:1821px;top:136px;border-width:7px 5.500px 0 5.500px"></div>
<div class="a" style="left:1845px;top:127px;width:25px;height:25px;border:1px solid #15151a;background:linear-gradient(#5a5b64,#42434b 55%,#393a42)"></div>
<svg class="a" style="left:1849px;top:131px" width="17" height="17" viewBox="0 0 17 17"><circle cx="10.500" cy="6.500" r="4.200" fill="none" stroke="#8e8e92" stroke-width="1.600"/><path d="M7.500 9.500L2 15" stroke="#8e8e92" stroke-width="2"/></svg>
<div class="a" style="left:1875px;top:127px;width:25px;height:25px;border:1px solid #15151a;background:linear-gradient(#5a5b64,#42434b 55%,#393a42)"></div>
<svg class="a" style="left:1880px;top:134px" width="6" height="12" viewBox="0 0 6 12"><path d="M1 1L9 11" stroke="#8e8e92" stroke-width="2"/><path d="M9 1L1 11" stroke="#8e8e92" stroke-width="2"/></svg>
<div class="a" style="left:1883px;top:156px;width:3px;height:786px;background:#242427"></div><div class="a" style="left:1883px;top:156px;width:3px;height:17px;background:#0c0c0e"></div>
<div class="a" style="left:1657px;top:944px;width:229px;height:2px;background:#e6e6e8"></div>
<div class="a" style="left:0;top:1082px;width:1886px;height:1px;background:#a4a4a6"></div>
<div class="a" style="left:0;top:1083px;width:1886px;height:30px;background:#1f1f21"></div>
<div class="a" style="left:0;top:1113px;width:1886px;height:9px;background:#eeeeee"></div>
<div class="a" style="left:1205px;top:1117px;width:50px;height:10px;background:#f0b6b0;border-radius:6px 6px 0 0"></div>
<div class="a" style="left:1261px;top:1117px;width:48px;height:10px;background:#fbfbfb;border-radius:6px 6px 0 0"></div>
</body></html>
